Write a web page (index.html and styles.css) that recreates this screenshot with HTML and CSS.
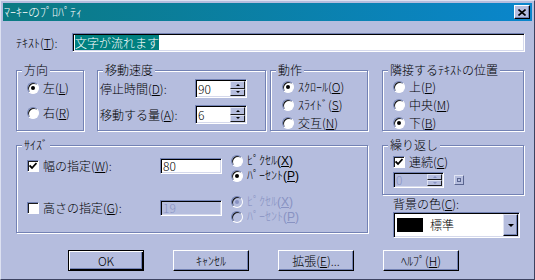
FILE: index.html
```html
<!DOCTYPE html>
<html lang="ja">
<head>
    <meta charset="UTF-8">
    <title>マーキーのプロパティ</title>
    <link rel="stylesheet" href="styles.css">
</head>
<body>

<div class="window">
    <div class="titlebar">
        <span class="title">ﾏｰｷｰのﾌﾟﾛﾊﾟﾃｨ</span>
        <div class="close">
            <svg width="8" height="7" viewBox="0 0 8 7"><path d="M0.5 0.5L7.5 6.5M7.5 0.5L0.5 6.5" stroke="#000" stroke-width="1.6"/></svg>
        </div>
    </div>

    <div class="content">
        <div class="text-row">
            <span class="text-label">ﾃｷｽﾄ(<u>T</u>):</span>
            <div class="field text-field"><span class="selected">文字が流れます</span></div>
        </div>

        <div class="groups top">
            <div class="group dir">
                <span class="group-title">方向</span>
                <div class="option"><span class="radio on"></span><span>左(<u>L</u>)</span></div>
                <div class="option"><span class="radio"></span><span>右(<u>R</u>)</span></div>
            </div>

            <div class="group speed">
                <span class="group-title">移動速度</span>
                <div class="speed-row">
                    <span class="speed-label">停止時間(<u>D</u>):</span>
                    <div class="field spin">
                        <span class="spin-value">90</span>
                        <div class="spinner">
                            <div class="spin-btn up"></div>
                            <div class="spin-btn down"></div>
                        </div>
                    </div>
                </div>
                <div class="speed-row">
                    <span class="speed-label">移動する量(<u>A</u>):</span>
                    <div class="field spin">
                        <span class="spin-value">6</span>
                        <div class="spinner">
                            <div class="spin-btn up"></div>
                            <div class="spin-btn down"></div>
                        </div>
                    </div>
                </div>
            </div>

            <div class="group action">
                <span class="group-title">動作</span>
                <div class="option"><span class="radio on"></span><span>ｽｸﾛｰﾙ(<u>O</u>)</span></div>
                <div class="option"><span class="radio"></span><span>ｽﾗｲﾄﾞ(<u>S</u>)</span></div>
                <div class="option"><span class="radio"></span><span>交互(<u>N</u>)</span></div>
            </div>

            <div class="group align">
                <span class="group-title">隣接するﾃｷｽﾄの位置</span>
                <div class="option"><span class="radio"></span><span>上(<u>P</u>)</span></div>
                <div class="option"><span class="radio"></span><span>中央(<u>M</u>)</span></div>
                <div class="option"><span class="radio on"></span><span>下(<u>B</u>)</span></div>
            </div>
        </div>

        <div class="groups bottom">
            <div class="group size">
                <span class="group-title">ｻｲｽﾞ</span>
                <div class="size-row">
                    <div class="option size-check first">
                        <span class="checkbox on"><svg width="8" height="8" viewBox="0 0 8 8"><path d="M0.5 3.5L3 6L7.5 1" fill="none" stroke="#000" stroke-width="1.8"/></svg></span>
                        <span>幅の指定(<u>W</u>):</span>
                    </div>
                    <div class="field size-field first">80</div>
                    <div class="units">
                        <div class="option"><span class="radio"></span><span>ﾋﾟｸｾﾙ(<u>X</u>)</span></div>
                        <div class="option"><span class="radio on"></span><span>ﾊﾟｰｾﾝﾄ(<u>P</u>)</span></div>
                    </div>
                </div>
                <div class="size-row">
                    <div class="option size-check second">
                        <span class="checkbox"></span>
                        <span>高さの指定(<u>G</u>):</span>
                    </div>
                    <div class="field size-field second disabled">19</div>
                    <div class="units disabled">
                        <div class="option"><span class="radio on"></span><span>ﾋﾟｸｾﾙ(<u>X</u>)</span></div>
                        <div class="option"><span class="radio"></span><span>ﾊﾟｰｾﾝﾄ(<u>P</u>)</span></div>
                    </div>
                </div>
            </div>

            <div class="side">
                <div class="group repeat">
                    <span class="group-title">繰り返し</span>
                    <div class="option">
                        <span class="checkbox on"><svg width="8" height="8" viewBox="0 0 8 8"><path d="M0.5 3.5L3 6L7.5 1" fill="none" stroke="#000" stroke-width="1.8"/></svg></span>
                        <span>連続(<u>C</u>)</span>
                    </div>
                    <div class="repeat-row">
                        <div class="field spin small disabled">
                            <span class="spin-value">0</span>
                            <div class="spinner">
                                <div class="spin-btn up"></div>
                                <div class="spin-btn down"></div>
                            </div>
                        </div>
                        <div class="infinite"><span></span></div>
                    </div>
                </div>

                <div class="bg-label">背景の色(<u>C</u>):</div>
                <div class="field combo">
                    <span class="swatch"></span>
                    <span class="combo-text">標準</span>
                    <div class="drop"></div>
                </div>
            </div>
        </div>

        <div class="buttons">
            <div class="btn default"><span>OK</span></div>
            <div class="btn"><span>ｷｬﾝｾﾙ</span></div>
            <div class="btn"><span>拡張(<u>E</u>)...</span></div>
            <div class="btn"><span>ﾍﾙﾌﾟ(<u>H</u>)</span></div>
        </div>
    </div>
</div>

</body>
</html>
```

FILE: styles.css
```css
* {
    box-sizing: border-box;
}

body {
    margin: 0;
    background-color: #b5bdde;
    font-family: "Noto Sans CJK JP", "Liberation Sans", sans-serif;
    font-size: 12px;
    font-weight: 300;
    line-height: 14px;
    color: #000;
}

u {
    text-underline-offset: 1px;
}

.window {
    width: 535px;
    height: 280px;
    padding: 2px;
    background-color: #b5bdde;
    border: 1px solid;
    border-color: #dde1f1 #3c4260 #3c4260 #dde1f1;
}

/* title bar */
.titlebar {
    height: 18px;
    display: flex;
    align-items: center;
    justify-content: space-between;
    padding: 0 2px 0 1px;
    background: linear-gradient(to right, #0b7a82, #0a86cc);
    color: #fff;
}

.close {
    width: 16px;
    height: 14px;
    display: flex;
    align-items: center;
    justify-content: center;
    background-color: #b5bdde;
    border: 1px solid;
    border-color: #fff #000 #000 #fff;
    box-shadow: inset -1px -1px 0 #7382b4;
}

.content {
    padding: 12px 7px 0 13px;
}

/* common controls */
.field {
    background-color: #fff;
    border: 1px solid;
    border-color: #7382b4 #fff #fff #7382b4;
    box-shadow: inset 1px 1px 0 #000, inset -1px -1px 0 #d5d9ec;
}

.field.disabled {
    background-color: #b5bdde;
    color: #8892c2;
}

.option {
    display: flex;
    align-items: center;
    gap: 4px;
    height: 14px;
    white-space: nowrap;
}

.radio {
    position: relative;
    flex: none;
    width: 12px;
    height: 12px;
    border-radius: 50%;
    background-color: #fff;
    border: 1px solid;
    border-color: #7382b4 #fff #fff #7382b4;
    box-shadow: inset 1px 1px 0 #1a1a1a;
}

.radio.on::after {
    content: "";
    position: absolute;
    left: 3px;
    top: 3px;
    width: 4px;
    height: 4px;
    border-radius: 50%;
    background-color: #000;
}

.checkbox {
    flex: none;
    width: 12px;
    height: 12px;
    display: flex;
    align-items: center;
    justify-content: center;
    background-color: #fff;
    border: 1px solid;
    border-color: #7382b4 #fff #fff #7382b4;
    box-shadow: inset 1px 1px 0 #1a1a1a;
}

.disabled .radio {
    background-color: #b5bdde;
}

.disabled .radio.on::after {
    background-color: #8892c2;
}

.units.disabled {
    color: #8892c2;
}

/* group boxes */
.group {
    position: relative;
    border: 1px solid #7382b4;
    box-shadow: 1px 1px 0 #fff, inset 1px 1px 0 #fff;
}

.group-title {
    position: absolute;
    top: -8px;
    left: 5px;
    padding: 0 2px;
    background-color: #b5bdde;
    white-space: nowrap;
}

.groups {
    display: flex;
    align-items: flex-start;
}

.groups.top {
    margin-top: 18px;
}

.groups.top .group {
    height: 61px;
}

.groups.bottom {
    margin-top: 14px;
}

/* text row */
.text-row {
    display: flex;
    align-items: center;
    height: 19px;
}

.text-label {
    width: 56px;
    flex: none;
}

.text-field {
    flex: 1;
    height: 19px;
    padding: 1px 2px;
    line-height: 15px;
}

.selected {
    display: inline-block;
    background-color: #008080;
    color: #fff;
    line-height: 15px;
}

/* direction */
.dir {
    width: 68px;
    margin-right: 13px;
    display: flex;
    flex-direction: column;
    gap: 11px;
    padding: 10px 0 0 10px;
}

/* speed */
.speed {
    width: 169px;
    margin-right: 4px;
    display: flex;
    flex-direction: column;
    gap: 7px;
    padding: 8px 0 0 2px;
}

.speed-row {
    display: flex;
    align-items: center;
    height: 19px;
}

.speed-label {
    width: 95px;
    flex: none;
    white-space: nowrap;
}

.spin {
    width: 52px;
    height: 19px;
    padding: 1px;
    display: flex;
}

.spin-value {
    flex: 1;
    padding-left: 1px;
    line-height: 15px;
}

.spinner {
    width: 15px;
    display: flex;
    flex-direction: column;
}

.spin-btn {
    flex: 1;
    display: flex;
    align-items: center;
    justify-content: center;
    background-color: #b5bdde;
    border: 1px solid;
    border-color: #dfe3f3 #1a1a1a #1a1a1a #dfe3f3;
}

.spin-btn::after {
    content: "";
    border-left: 2px solid transparent;
    border-right: 2px solid transparent;
}

.spin-btn.up::after {
    border-bottom: 2px solid #000;
}

.spin-btn.down::after {
    border-top: 2px solid #000;
}

.disabled .spin-btn.up::after {
    border-bottom-color: #8892c2;
}

.disabled .spin-btn.down::after {
    border-top-color: #8892c2;
}

/* action */
.action {
    width: 98px;
    margin-right: 14px;
    display: flex;
    flex-direction: column;
    gap: 4px;
    padding: 9px 0 0 11px;
}

/* adjacent text position */
.align {
    width: 142px;
    display: flex;
    flex-direction: column;
    gap: 4px;
    padding: 9px 0 0 10px;
}

/* size */
.size {
    width: 352px;
    height: 88px;
    margin-right: 14px;
    padding: 8px 0 0 10px;
}

.size-row {
    display: flex;
    align-items: flex-start;
}

.size-row + .size-row {
    margin-top: 12px;
}

.size-check {
    width: 133px;
    flex: none;
}

.size-check.first {
    margin-top: 5px;
}

.size-check.second {
    margin-top: 6px;
}

.size-field {
    width: 62px;
    height: 16px;
    padding: 0 2px;
    line-height: 14px;
}

.size-field.first {
    margin-top: 4px;
}

.size-field.second {
    margin-top: 5px;
}

.units {
    margin-left: 9px;
    display: flex;
    flex-direction: column;
    gap: 1px;
    font-family: "Liberation Sans", "Noto Sans CJK JP", sans-serif;
}

/* right column */
.side {
    width: 142px;
    display: flex;
    flex-direction: column;
}

.repeat {
    height: 50px;
    padding: 9px 0 0 10px;
}

.repeat-row {
    display: flex;
    align-items: center;
    margin-top: 3px;
}

.spin.small {
    width: 51px;
    height: 16px;
}

.spin.small .spin-value {
    line-height: 12px;
}

.infinite {
    width: 10px;
    height: 10px;
    margin-left: 10px;
    display: flex;
    align-items: center;
    justify-content: center;
    border: 1px solid;
    border-color: #dfe3f3 #5a6590 #5a6590 #dfe3f3;
}

.infinite span {
    width: 4px;
    height: 4px;
    border: 1px solid #5a6590;
}

.bg-label {
    margin: 2px 0 0 11px;
}

.combo {
    width: 127px;
    height: 26px;
    margin: 1px 0 0 11px;
    padding: 1px;
    display: flex;
    align-items: center;
}

.swatch {
    width: 26px;
    height: 14px;
    margin-left: 2px;
    background-color: #000;
}

.combo-text {
    margin-left: 7px;
}

.drop {
    width: 15px;
    height: 22px;
    margin-left: auto;
    display: flex;
    align-items: center;
    justify-content: center;
    background-color: #b5bdde;
    border: 1px solid;
    border-color: #dfe3f3 #000 #000 #dfe3f3;
    box-shadow: inset -1px -1px 0 #7382b4;
}

.drop::after {
    content: "";
    border-left: 3px solid transparent;
    border-right: 3px solid transparent;
    border-top: 3px solid #000;
}

/* buttons */
.buttons {
    display: flex;
    gap: 29px;
    margin-top: 12px;
    padding-left: 52px;
}

.btn {
    width: 76px;
    height: 21px;
    display: flex;
    align-items: center;
    justify-content: center;
    white-space: nowrap;
    border: 1px solid;
    border-color: #fff #000 #000 #fff;
    box-shadow: inset -1px -1px 0 #7382b4;
}

.btn.default {
    border-color: #000;
    box-shadow: inset 1px 1px 0 #fff, inset -1px -1px 0 #000, inset -2px -2px 0 #7382b4;
}
```
